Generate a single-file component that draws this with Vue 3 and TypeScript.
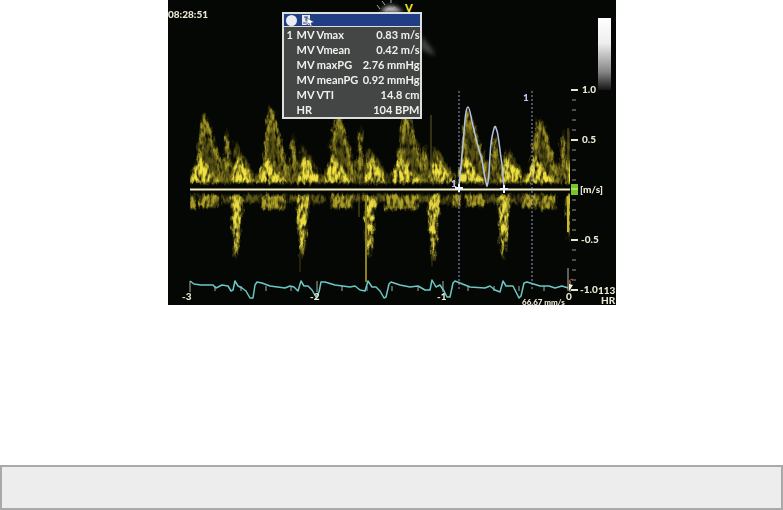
<script setup lang="ts">
interface Measurement {
  index: string
  name: string
  value: string
}

interface Beat {
  start: number
  peak: number
  top: number
  end: number
  atrial: number
  atrialTop: number
  late: number
  lateTop: number
  jet: number
  jetEnd: number
}

const measurements: Measurement[] = [
  { index: '1', name: 'MV Vmax', value: '0.83 m/s' },
  { index: '', name: 'MV Vmean', value: '0.42 m/s' },
  { index: '', name: 'MV maxPG', value: '2.76 mmHg' },
  { index: '', name: 'MV meanPG', value: '0.92 mmHg' },
  { index: '', name: 'MV VTI', value: '14.8 cm' },
  { index: '', name: 'HR', value: '104 BPM' },
]

const beats: Beat[] = [
  { start: 192, peak: 205, top: 114, end: 221, atrial: 227, atrialTop: 126, late: 235, lateTop: 139, jet: 235, jetEnd: 258 },
  { start: 259, peak: 271, top: 107, end: 286, atrial: 293, atrialTop: 132, late: 301, lateTop: 144, jet: 301, jetEnd: 259 },
  { start: 325, peak: 338, top: 112, end: 353, atrial: 360, atrialTop: 124, late: 367, lateTop: 148, jet: 368, jetEnd: 258 },
  { start: 393, peak: 406, top: 112, end: 423, atrial: 425, atrialTop: 143, late: 433, lateTop: 148, jet: 432, jetEnd: 263 },
  { start: 458, peak: 468, top: 110, end: 485, atrial: 495, atrialTop: 130, late: 504, lateTop: 150, jet: 502, jetEnd: 259 },
  { start: 527, peak: 540, top: 118, end: 555, atrial: 563, atrialTop: 128, late: 568, lateTop: 126, jet: 568, jetEnd: 241 },
]

const haze = (b: Beat): string =>
  `M${b.start - 3} 183L${b.start + 5} 161L${b.peak - 5} 138L${b.peak - 1} ${b.top}L${b.peak + 4} ${b.top + 6}` +
  `L${b.end - 5} 151L${b.end} 164L${b.atrial - 2} 158L${b.atrial} ${b.atrialTop}L${b.atrial + 3} 158` +
  `L${b.late - 1} 165L${b.late} ${b.lateTop}L${b.late + 5} 151L${b.late + 12} 160L${b.late + 20} 176V183Z`

const ridge = (b: Beat): string =>
  `M${b.start + 6} 174L${b.peak - 5} 145L${b.peak - 1} ${b.top + 6}L${b.peak + 3} ${b.top + 14}L${b.end - 4} 155L${b.end} 174` +
  `M${b.atrial} ${b.atrialTop + 9}V170`

const glow = (b: Beat): string =>
  `M${b.start - 2} 182L${b.start + 2} 168L${b.start + 8} 157L${b.start + 14} 164L${b.start + 20} 175L${b.end} 182Z` +
  `M${b.late - 3} 182L${b.late} 164L${b.late + 4} 156L${b.late + 10} 166L${b.late + 18} 178V182Z`

const jet = (b: Beat): string =>
  b.jet > 560
    ? 'M566 195H570V242L567 222Z'
    : `M${b.jet - 4} 195H${b.jet + 8}L${b.jet + 6} 218L${b.jet + 4} 242L${b.jet + 1} ${b.jetEnd}L${b.jet - 1} 247L${b.jet - 3} 218Z`

const underBands: [number, number, number][] = [
  [190, 5, 14], [199, 20, 12], [222, 37, 7], [261, 24, 14], [288, 37, 8], [331, 21, 13],
  [353, 31, 7], [384, 34, 14], [419, 31, 8], [452, 8, 12], [466, 18, 11], [486, 33, 8], [521, 18, 12], [541, 14, 14],
]

const axisTicks = Array.from({ length: 21 }, (_, i) => ({
  y: 90 + i * 10,
  major: i % 5 === 0,
}))

const timeTicks = Array.from({ length: 16 }, (_, i) => ({
  x: 190 + Math.round(i * 25.3),
  major: i % 5 === 0,
}))

const axisLabels = [
  { x: 582, y: 93, text: '1.0' },
  { x: 582, y: 143, text: '0.5' },
  { x: 580, y: 193, text: '[m/s]' },
  { x: 581, y: 243, text: '-0.5' },
  { x: 580, y: 293, text: '-1.0' },
]

const ecg =
  'M190 281L194 284L201 285L213 285L216 288L222 285L228 286L231 291L233 290L235 281L238 286L242 288L246 291L250 298L253 298L255 285L257 282L262 283L270 286L285 288L290 286L294 287L298 291L301 281L304 286L308 286L312 290L316 297L319 292L321 282L325 282L335 285L350 287L355 286L360 290L365 291L368 281L372 287L376 287L380 291L384 298L386 297L389 284L391 282L400 285L410 287L418 286L425 290L430 290L432 280L436 287L440 285L444 291L447 297L450 297L453 283L455 281L460 283L470 287L485 288L490 286L495 290L500 292L503 281L506 286L513 286L516 292L519 298L521 296L524 283L527 282L540 286L549 286L555 288L562 286L568 288'
</script>

<template>
  <main class="page">
    <figure class="scan">
      <svg class="display" viewBox="168 0 448 305" role="img" aria-label="Mitral valve Doppler">
        <defs>
          <filter id="speckle" filterUnits="userSpaceOnUse" x="186" y="95" width="390" height="200">
            <feGaussianBlur in="SourceGraphic" stdDeviation="1" result="soft" />
            <feTurbulence type="fractalNoise" baseFrequency="0.32 0.12" numOctaves="2" seed="8" result="noise" />
            <feDisplacementMap in="soft" in2="noise" scale="7" xChannelSelector="R" yChannelSelector="G" result="ragged" />
            <feColorMatrix in="noise" type="matrix" values="0 0 0 0 1  0 0 0 0 1  0 0 0 0 1  0 0 2.4 0 -0.4" result="grain" />
            <feComposite in="ragged" in2="grain" operator="in" result="speckled" />
            <feGaussianBlur in="speckled" stdDeviation="0.6" />
          </filter>
          <filter id="soften" x="-30%" y="-30%" width="160%" height="160%">
            <feGaussianBlur stdDeviation="2" />
          </filter>
          <linearGradient id="grey" x1="0" y1="0" x2="0" y2="1">
            <stop offset="0" stop-color="#fff" />
            <stop offset="0.35" stop-color="#eee" />
            <stop offset="0.75" stop-color="#858585" />
            <stop offset="1" stop-color="#151515" />
          </linearGradient>
          <clipPath id="sweep"><path d="M190 95H570V290H190Z" /></clipPath>
        </defs>

        <path d="M168 0H616V305H168Z" fill="#050704" />

        <g filter="url(#soften)">
          <path d="M380 12Q390 0 403 12Z" fill="#ccc" />
          <path d="M421 35L432 49L435 56L421 49Z" fill="#444" />
        </g>
        <path d="M377 5l3 4M382 1l3 4M391 0v3M386 11l3-3 3 2 3-3" stroke="#aaa" fill="none" />
        <text x="405" y="12" class="probe">V</text>

        <g clip-path="url(#sweep)">
          <g filter="url(#speckle)">
            <path d="M190 174H570V183H190Z" fill="#b9a922" opacity="0.4" />
            <template v-for="b in beats" :key="b.start">
              <path :d="haze(b)" fill="#a89a1f" opacity="0.5" />
              <path :d="ridge(b)" stroke="#c4b42b" stroke-width="4" fill="none" opacity="0.75" />
              <path :d="glow(b)" fill="#f0e03e" />
              <path :d="jet(b)" fill="#ecdc40" />
            </template>
            <path
              v-for="[x, w, h] in underBands"
              :key="x"
              :d="`M${x} 195h${w}v${h}h${-w}Z`"
              fill="#cbbb2f"
              :opacity="h > 10 ? 0.85 : 0.45"
            />
          </g>
          <path d="M366 196V282" stroke="#8c811b" stroke-width="2" />
          <path d="M359 197V217M431 115V180M568 128V182" stroke="#665f24" />
          <path d="M300 252V272M432 258V266" stroke="#423d14" />
          <path d="M568 196V232" stroke="#c8ba30" stroke-width="2" />
        </g>

        <path d="M190 189.500H570" stroke="#f6efc0" stroke-width="2" />
        <path
          v-for="t in axisTicks"
          :key="t.y"
          :d="t.major ? `M571 ${t.y}H578` : `M572 ${t.y}H576`"
          stroke="#e5e4d5"
          :stroke-width="t.major ? 2 : 1"
          :opacity="t.major ? 1 : 0.65"
        />
        <path d="M571 184H578V195H571Z" fill="#75c52b" />
        <path d="M571 189H578" stroke="#dcf29b" />

        <path
          v-for="t in timeTicks"
          :key="t.x"
          :d="t.major ? `M${t.x} 281V292` : `M${t.x} 286V291`"
          stroke="#a9ada5"
        />
        <path :d="ecg" class="ecg" />
        <path d="M568 268V291" stroke="#b5b7ad" />
        <path d="M569 284l4 1-2 3-2 3Z" fill="#fff6ca" />
        <path d="M568 283l2-3 3-1" stroke="#d83b32" fill="none" />

        <path d="M459 91V290M532 91V290" class="calipers" />
        <path
          d="M459 187C461 165 463 145 464 132S466 107 468 107S471 119 473 126S477 145 480 153S485 182 487 186C490 181 489 151 492 137S495 125 497 131S500 154 502 164L504 188"
          class="trace"
        />
        <path d="M455 188H463M459 184V192M500 189H508M504 185V193" stroke="#eef0ff" stroke-width="2" />
        <text x="451" y="187" class="marker">1</text>
        <text x="523" y="101" class="marker">1</text>

        <path d="M598 18H611V90H598Z" fill="url(#grey)" />
        <g class="label">
          <text x="168" y="18">08:28:51</text>
          <text v-for="l in axisLabels" :key="l.text" :x="l.x" :y="l.y">{{ l.text }}</text>
          <text x="598" y="294">113</text>
          <text x="601" y="304">HR</text>
          <text x="182" y="300">-3</text>
          <text x="310" y="300">-2</text>
          <text x="437" y="300">-1</text>
          <text x="566" y="300">0</text>
          <text x="522" y="305" class="speed">66.67 mm/s</text>
        </g>
      </svg>

      <section class="results">
        <header class="bar">
          <button class="dot" type="button" aria-label="Select"></button>
          <svg class="tool" viewBox="0 0 14 13" aria-hidden="true">
            <path d="M1 1H9V11H1Z" fill="#e2e7f0" />
            <path d="M3 3H7M5 3V7M2 9H5" stroke="#31456f" fill="none" />
            <path d="M6 4L13 8L10 9L11 12L9 12L8 9L6 11Z" fill="#fff" stroke="#31456f" stroke-width="0.6" />
          </svg>
        </header>
        <table class="values">
          <tbody>
            <tr v-for="m in measurements" :key="m.name">
              <td class="index">{{ m.index }}</td>
              <th scope="row">{{ m.name }}</th>
              <td class="value">{{ m.value }}</td>
            </tr>
          </tbody>
        </table>
      </section>
    </figure>
    <div class="footer"></div>
  </main>
</template>

<style>
body {
  margin: 0;
  background: #fff;
}
</style>

<style scoped>
.page {
  display: flex;
  flex-direction: column;
  align-items: center;
  gap: 160px;
  font-family: Lato, "Liberation Sans", sans-serif;
}
.scan {
  position: relative;
  width: 100%;
  max-width: 448px;
  margin: 0;
}
.display {
  display: block;
  width: 100%;
}
.ecg {
  fill: none;
  stroke: #6cc8c7;
  stroke-width: 1.5;
  stroke-linejoin: round;
}
.calipers {
  stroke: #9a9ad0;
  stroke-dasharray: 2 2;
}
.trace {
  fill: none;
  stroke: #b4c3df;
  stroke-width: 1.5;
}
.label {
  fill: #ece9d4;
  font-size: 10px;
  font-weight: 900;
}
.label .speed {
  font-size: 8px;
}
.marker {
  fill: #c5c5fa;
  font-size: 10px;
  font-weight: 900;
}
.probe {
  fill: #f0e72c;
  font-size: 11px;
  font-weight: 900;
}
.results {
  position: absolute;
  top: 12px;
  left: 114px;
  box-sizing: border-box;
  width: 140px;
  border: 2px solid #dedede;
  background: #444545;
  color: #f0f0ec;
}
.bar {
  display: flex;
  box-sizing: border-box;
  align-items: center;
  gap: 4px;
  height: 13px;
  padding-left: 2px;
  border-bottom: 1px solid #dedede;
  background: #203e84;
}
.dot {
  width: 11px;
  height: 11px;
  padding: 0;
  border: 0;
  border-radius: 50%;
  background: #e9edf1;
}
.tool {
  width: 14px;
  height: 13px;
}
.values {
  width: 100%;
  border-collapse: collapse;
  font-size: 11px;
  line-height: 15px;
  font-weight: 700;
  white-space: nowrap;
}
.values td,
.values th {
  padding: 0;
  text-align: left;
}
.values .index {
  width: 10px;
  padding-left: 3px;
}
.values .value {
  text-align: right;
}
.footer {
  box-sizing: border-box;
  width: 100%;
  height: 45px;
  border: 2px solid #a9a9a9;
  background: #ededed;
}
</style>
